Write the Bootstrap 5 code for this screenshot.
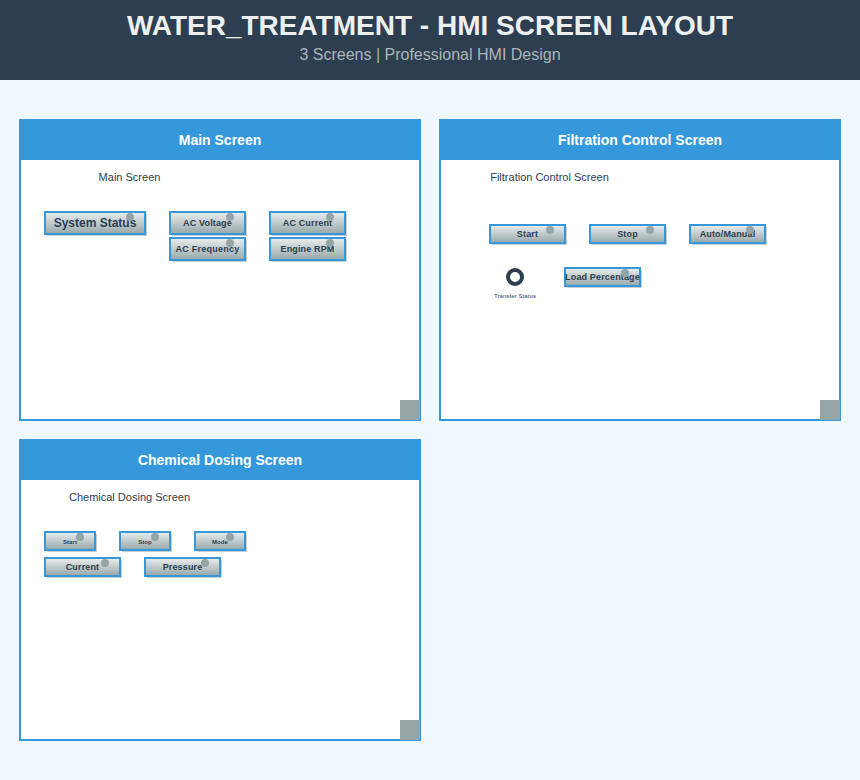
<!DOCTYPE html>
<html lang="en">
<head>
<meta charset="utf-8">
<meta name="viewport" content="width=device-width, initial-scale=1">
<title>WATER_TREATMENT - HMI Screen Layout</title>
<link href="https://cdn.jsdelivr.net/npm/bootstrap@5.3.0/dist/css/bootstrap.min.css" rel="stylesheet">
<style>
body { background: #f0f8ff; color: #2c3e50; font-family: "Liberation Sans", Arial, sans-serif; min-height: 780px; }
.page-top { height: 80px; background: #2c3e50; padding-top: 9px; }
.page-top h1 { font-size: 28px; line-height: 34px; color: #ecf0f1; }
.page-top p { font-size: 16px; line-height: 24px; color: #adb5bb; }
.screens { display: grid; grid-template-columns: 402px 402px; gap: 18px; padding: 39px 19px; }
.hmi { height: 302px; background: #fff; border: 2px solid #3498db; }
.hmi-head { height: 39px; background: #3498db; color: #fff; font-size: 14px; line-height: 39px; }
.hmi-label { font-size: 11px; line-height: 13px; width: 217px; margin-top: 11px; }
.hmi-corner { width: 20px; height: 20px; right: -1px; bottom: -1px; background: #95a5a6; }
.widgets { gap: 2px; padding-left: 23px; }
.widget-row { gap: 23px; }
.ctl { width: 77px; height: 24px; border: 2px solid #3498db; background: linear-gradient(#e6eaeb, #9baaab); box-shadow: 2px 2px 0 -1px #c8cdd0; font-size: 9px; font-weight: 700; line-height: 1; letter-spacing: .15px; white-space: nowrap; }
.ctl::after { content: ""; position: absolute; top: 0; right: 10px; width: 8px; height: 8px; border-radius: 50%; background: #95a5a6; }
.ctl-wide { width: 102px; font-size: 12px; letter-spacing: 0; }
.ctl-low { height: 20px; }
.ctl-mini { width: 52px; font-size: 6px; letter-spacing: .1px; padding-top: 2px; }
.ctl-spaced { letter-spacing: .25px; }
.lamp { width: 52px; font-size: 6px; line-height: 8px; letter-spacing: .08px; white-space: nowrap; }
.lamp svg { width: 20px; height: 20px; }
.lamp span { margin-top: 5px; }
.main-w { margin-top: 27px; }
.main-second { margin-left: 125px; }
.filter-w { margin-top: 40px; padding-left: 48px; gap: 23px; }
.chem-w { margin-top: 27px; gap: 6px; }
</style>
</head>
<body>
<header class="page-top text-center">
  <h1 class="fw-bold mb-0">WATER_TREATMENT - HMI SCREEN LAYOUT</h1>
  <p class="mb-0">3 Screens | Professional HMI Design</p>
</header>
<main class="screens">
  <section class="hmi position-relative">
    <h2 class="hmi-head fw-bold text-center mb-0">Main Screen</h2>
    <div class="hmi-label text-center">Main Screen</div>
    <div class="widgets main-w d-flex flex-column">
      <div class="widget-row d-flex">
        <div class="ctl ctl-wide position-relative d-flex align-items-center justify-content-center">System Status</div>
        <div class="ctl position-relative d-flex align-items-center justify-content-center">AC Voltage</div>
        <div class="ctl position-relative d-flex align-items-center justify-content-center">AC Current</div>
      </div>
      <div class="widget-row main-second d-flex">
        <div class="ctl ctl-spaced position-relative d-flex align-items-center justify-content-center">AC Frequency</div>
        <div class="ctl position-relative d-flex align-items-center justify-content-center">Engine RPM</div>
      </div>
    </div>
    <span class="hmi-corner position-absolute"></span>
  </section>
  <section class="hmi position-relative">
    <h2 class="hmi-head fw-bold text-center mb-0">Filtration Control Screen</h2>
    <div class="hmi-label text-center">Filtration Control Screen</div>
    <div class="widgets filter-w d-flex flex-column">
      <div class="widget-row d-flex">
        <div class="ctl ctl-low position-relative d-flex align-items-center justify-content-center">Start</div>
        <div class="ctl ctl-low position-relative d-flex align-items-center justify-content-center">Stop</div>
        <div class="ctl ctl-low position-relative d-flex align-items-center justify-content-center">Auto/Manual</div>
      </div>
      <div class="widget-row d-flex align-items-start">
        <div class="lamp d-flex flex-column align-items-center">
          <svg viewBox="0 0 20 20"><circle cx="10" cy="10" r="7" fill="none" stroke="#2c3e50" stroke-width="4"/></svg>
          <span>Transfer Status</span>
        </div>
        <div class="ctl ctl-low position-relative d-flex align-items-center justify-content-center">Load Percentage</div>
      </div>
    </div>
    <span class="hmi-corner position-absolute"></span>
  </section>
  <section class="hmi position-relative">
    <h2 class="hmi-head fw-bold text-center mb-0">Chemical Dosing Screen</h2>
    <div class="hmi-label text-center">Chemical Dosing Screen</div>
    <div class="widgets chem-w d-flex flex-column">
      <div class="widget-row d-flex">
        <div class="ctl ctl-low ctl-mini position-relative d-flex align-items-center justify-content-center">Start</div>
        <div class="ctl ctl-low ctl-mini position-relative d-flex align-items-center justify-content-center">Stop</div>
        <div class="ctl ctl-low ctl-mini position-relative d-flex align-items-center justify-content-center">Mode</div>
      </div>
      <div class="widget-row d-flex">
        <div class="ctl ctl-low position-relative d-flex align-items-center justify-content-center">Current</div>
        <div class="ctl ctl-low position-relative d-flex align-items-center justify-content-center">Pressure</div>
      </div>
    </div>
    <span class="hmi-corner position-absolute"></span>
  </section>
</main>
<script src="https://cdn.jsdelivr.net/npm/bootstrap@5.3.0/dist/js/bootstrap.bundle.min.js"></script>
</body>
</html>
